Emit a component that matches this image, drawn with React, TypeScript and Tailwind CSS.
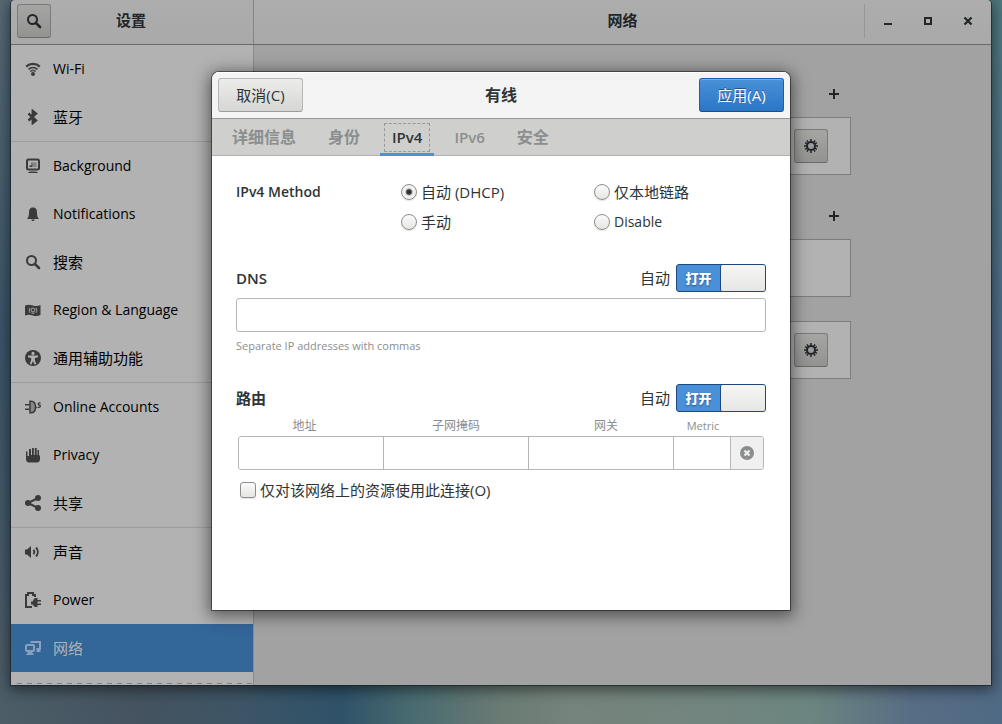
import { useState } from 'react'
import type { ReactNode } from 'react'
import clsx from 'clsx'

type SidebarItem = { label: string; icon: ReactNode; cjk?: boolean; divider?: boolean }

function Icon({ children }: { children: ReactNode }) {
	return (
		<svg viewBox="0 0 16 16" className="size-4 shrink-0" fill="currentColor" aria-hidden="true">
			{children}
		</svg>
	)
}

function SearchIcon() {
	return (
		<Icon>
			<circle cx="6.5" cy="6.5" r="4.5" fill="none" stroke="currentColor" strokeWidth="2" />
			<path d="M9.8 9.8 14 14" stroke="currentColor" strokeWidth="2.6" strokeLinecap="round" />
		</Icon>
	)
}

function GearIcon() {
	return (
		<Icon>
			<circle cx="8" cy="8" r="4" fill="none" stroke="currentColor" strokeWidth="2" />
			<path
				d="M8 1v2.5M8 12.5V15M1 8h2.5M12.5 8H15M3.9 2.4l1.3 2M10.8 11.6l1.3 2M12.1 2.4l-1.3 2M5.2 11.6l-1.3 2M2.1 4.7l2.1 1.2M11.8 10.1l2.1 1.2M13.9 4.7l-2.1 1.2M4.2 10.1l-2.1 1.2"
				stroke="currentColor"
				strokeWidth="1.5"
			/>
		</Icon>
	)
}

function PlusIcon() {
	return (
		<Icon>
			<path d="M7 3h2v4h4v2H9v4H7V9H3V7h4z" />
		</Icon>
	)
}

const sidebarItems: SidebarItem[] = [
	{
		label: 'Wi-Fi',
		icon: (
			<Icon>
				<circle cx="8" cy="13" r="2" />
				<g fill="none" stroke="currentColor">
					<path d="M1.2 5.6a10 10 0 0 1 13.600 0" strokeWidth="2.2" />
					<path d="M3.5 8.3a6.500 6.500 0 0 1 9 0" strokeWidth="1.6" />
					<path d="M5.3 10.6a4 4 0 0 1 5.400 0" strokeWidth="1.6" opacity=".8" />
				</g>
			</Icon>
		),
	},
	{
		label: '蓝牙',
		cjk: true,
		divider: true,
		icon: (
			<Icon>
				<path d="M3.5 4.5l7.5 7L7.800 14V2L11 4.500l-7.500 7" fill="none" stroke="currentColor" strokeWidth="2.4" />
			</Icon>
		),
	},
	{
		label: 'Background',
		icon: (
			<Icon>
				<rect x="2" y="1.5" width="12" height="10" rx="1.5" fill="none" stroke="currentColor" strokeWidth="2" />
				<path d="M4.500 9V7.500h2V4.500h1V9zM3 15c0-1.500 2-1.500 5-1.500s5 0 5 1.500z" />
				<path d="M8 4.500h3.500V9H8z" opacity=".4" />
			</Icon>
		),
	},
	{
		label: 'Notifications',
		icon: (
			<Icon>
				<path d="M8 1.500c3 0 4 2 4 5 0 3.500.5 4.500 2 6.500H2c1.500-2 2-3 2-6.500 0-3 1-5 4-5zM6.500 13.500h3c0 1-.5 1.500-1.500 1.500s-1.500-.5-1.500-1.500z" />
			</Icon>
		),
	},
	{ label: '搜索', cjk: true, icon: <SearchIcon /> },
	{
		label: 'Region & Language',
		icon: (
			<Icon>
				<path d="M0 3.500c3-1 5-1 8 0s5 .5 7.500-.5v10c-2.500 1-4.500 1.500-7.500.5s-5-1-8 0z" />
				<g fill="none" stroke="#b2b2b2" strokeWidth=".9">
					<circle cx="8" cy="8" r="1.900" />
					<path d="M5 5.800c-1 1.500-1 3.500 0 5M11 5.800c1 1.500 1 3.500 0 5M6.500 11.200h3" />
				</g>
			</Icon>
		),
	},
	{
		label: '通用辅助功能',
		cjk: true,
		divider: true,
		icon: (
			<Icon>
				<circle cx="8" cy="8" r="8" />
				<circle cx="8" cy="3.400" r="1.600" fill="#b2b2b2" />
				<path d="M3 5.500h10v1.700L9.800 8v2l1.500 4-1.700.6L8 11l-1.600 3.600-1.700-.6 1.500-4V8L3 7.200z" fill="#b2b2b2" />
			</Icon>
		),
	},
	{
		label: 'Online Accounts',
		icon: (
			<Icon>
				<path d="M0 5h4.500v1.500H0zM0 9.500h4.500V11H0z" />
				<path d="M5 2.200h1c3 0 4.500 2.600 4.500 5.800s-1.500 5.800-4.500 5.800H5z" fillOpacity=".35" stroke="currentColor" strokeWidth="1.500" />
				<path d="M10.500 8.500h1.300M15.600 3.800h-1.300c-1.300 0-1.500 2 0 2.200s1.300 2.300-.2 2.300h-1.500" fill="none" stroke="currentColor" strokeWidth="1.300" />
			</Icon>
		),
	},
	{
		label: 'Privacy',
		icon: (
			<Icon>
				<path d="M1 4.500h1.500V9H4V2h2v6h1V1h1.800v7h1V1h1.900v7h.8V3h1.500v6.500l1-2H15V12c0 2-1 3.500-3 3.500H4c-2 0-3-1.500-3-3.500z" />
			</Icon>
		),
	},
	{
		label: '共享',
		cjk: true,
		divider: true,
		icon: (
			<Icon>
				<path d="M13 3 3 8l10 5" fill="none" stroke="currentColor" strokeWidth="2" />
				<circle cx="13" cy="3" r="3" />
				<circle cx="3" cy="8" r="3" />
				<circle cx="13" cy="13" r="3" />
			</Icon>
		),
	},
	{
		label: '声音',
		cjk: true,
		icon: (
			<Icon>
				<path d="M0 5.500h2L6 2v12L2 10.500H0z" />
				<path d="M8.500 5.800c1 1.300 1 3.100 0 4.400M11 3.500c2.500 2.500 2.500 6.500 0 9" fill="none" stroke="currentColor" strokeWidth="1.800" />
			</Icon>
		),
	},
	{
		label: 'Power',
		icon: (
			<Icon>
				<path d="M7 15H1V3h2V1h5v2h2v2" fill="none" stroke="currentColor" strokeWidth="2" />
				<path d="M12.500 6v2H16v1.500h-3.500v2H16V13h-3.500v2H11c-1.800 0-2.800-1-3.200-2.500H6v-3h1.800C8.200 8 9.200 6 11 6z" />
			</Icon>
		),
	},
	{
		label: '网络',
		cjk: true,
		icon: (
			<Icon>
				<rect x="1" y="5" width="8" height="6" rx="1" fill="none" stroke="currentColor" strokeWidth="2" />
				<path d="M3 12h4l2 3H1z" />
				<path d="M6.500 3V2H15v7h-3.500" fill="none" stroke="currentColor" strokeWidth="2" />
				<path d="M11.500 9H14l2 3h-4.500z" />
			</Icon>
		),
	},
]

const tabs = ['详细信息', '身份', 'IPv4', 'IPv6', '安全']

function RaisedButton({ label, children }: { label: string; children: ReactNode }) {
	return (
		<button
			aria-label={label}
			className="flex size-[34px] items-center justify-center rounded-[3px] border border-[#7b7b78] border-b-[#6a6a66] bg-linear-to-b from-[#a5a5a4] to-[#939391]"
		>
			{children}
		</button>
	)
}

function Sidebar() {
	return (
		<nav className="w-[243px] shrink-0 border-r border-[#8b8b8b] bg-[#b2b2b2]">
			<ul>
				{sidebarItems.map((item) => (
					<li key={item.label} className={clsx(item.divider && 'border-b border-[#9d9d9d]')}>
						<a
							href="#"
							className={clsx(
								'flex h-12 items-center gap-3 px-3.5',
								item.cjk ? 'text-[15px]' : 'text-sm',
								item.label === '网络' ? 'bg-[#336699] text-[#b2b2b2]' : 'text-black'
							)}
						>
							<span className={item.label === '网络' ? 'text-[#8aa0bd]' : 'text-[#3a3a3a]'}>{item.icon}</span>
							{item.label}
						</a>
					</li>
				))}
			</ul>
			<div className="h-[13px] pt-[11px] pl-1.5">
				<div className="h-px bg-[repeating-linear-gradient(90deg,#7f7f7f_0_5px,transparent_5px_10px)]" />
			</div>
		</nav>
	)
}

function Card({ settings }: { settings?: boolean }) {
	return (
		<div className="flex h-[58px] items-center justify-end border border-[#7d7d7b] bg-[#b2b2b2] px-[22px]">
			{settings && (
				<RaisedButton label="选项">
					<GearIcon />
				</RaisedButton>
			)}
		</div>
	)
}

function AddButton() {
	return (
		<button aria-label="添加" className="mb-1.5 ml-auto flex size-[34px] items-center justify-center">
			<PlusIcon />
		</button>
	)
}

function NetworkPanel() {
	return (
		<main className="flex flex-1 justify-center bg-[#a2a2a2] px-6 pt-8">
			<div className="flex w-full max-w-[457px] flex-col gap-6">
				<section>
					<AddButton />
					<Card settings />
				</section>
				<section>
					<AddButton />
					<Card />
				</section>
				<Card settings />
			</div>
		</main>
	)
}

function SettingsWindow() {
	return (
		<div className="mx-[11px] overflow-hidden rounded-t-sm text-[#222628] shadow-[0_0_0_1px_rgba(20,30,36,.6),0_3px_14px_2px_rgba(0,0,0,.5)]">
			<header className="flex h-[45px] border-b border-[#6b6b66] bg-linear-to-b from-[#adadad] to-[#a9a9a9]">
				<div className="flex w-[243px] shrink-0 items-start border-r border-[#838381] px-1.5 pt-1">
					<RaisedButton label="搜索">
						<SearchIcon />
					</RaisedButton>
					<h1 className="mr-9 flex-1 text-center text-[15px] leading-8 font-bold">设置</h1>
				</div>
				<div className="grid flex-1 grid-cols-[1fr_auto_1fr] items-start pt-1">
					<span />
					<h2 className="text-[15px] leading-8 font-bold">网络</h2>
					<div className="flex justify-end gap-1.5 pr-1.5">
						<span className="h-[34px] w-px bg-[#979795]" />
						<button aria-label="最小化" className="flex size-[34px] items-center justify-center">
							<Icon><path d="M4 10h8v2H4z" /></Icon>
						</button>
						<button aria-label="最大化" className="flex size-[34px] items-center justify-center">
							<Icon><path d="M5 5h6v6H5z" fill="none" stroke="currentColor" strokeWidth="2" /></Icon>
						</button>
						<button aria-label="关闭" className="flex size-[34px] items-center justify-center">
							<Icon><path d="m4.500 4.500 7 7m0-7-7 7" stroke="currentColor" strokeWidth="2.200" /></Icon>
						</button>
					</div>
				</div>
			</header>
			<div className="flex">
				<Sidebar />
				<NetworkPanel />
			</div>
		</div>
	)
}

function MethodRadio({ id, label, checked }: { id: string; label: string; checked?: boolean }) {
	return (
		<div className="flex h-6 items-center gap-1">
			<input
				type="radio"
				name="method"
				id={id}
				defaultChecked={checked}
				className="size-4 appearance-none rounded-full border border-[#8e8e8a] bg-linear-to-b from-[#fbfbfb] to-[#e6e6e4] shadow-[0_1px_1px_rgba(0,0,0,.12)] checked:bg-[radial-gradient(circle,#2e3436_0_2px,#f1f1f0_4px)]"
			/>
			<label htmlFor={id} className={label === 'Disable' ? 'text-sm' : 'text-[15px]'}>
				{label}
			</label>
		</div>
	)
}

function AutoSwitch({ id }: { id: string }) {
	const [on, setOn] = useState(true)

	return (
		<div className="flex items-center gap-1.5">
			<label htmlFor={id} className="text-[15px]">自动</label>
			<button
				id={id}
				type="button"
				role="switch"
				aria-checked={on}
				onClick={() => setOn(!on)}
				className={clsx('flex h-7 w-[90px] rounded-[3px] border border-[#1c4a7d]', on ? 'bg-[#4a90d9]' : 'flex-row-reverse bg-[#8b8e8f]')}
			>
				<span className="flex-1 text-[13px] leading-[26px] font-black text-white [text-shadow:0_1px_2px_rgba(0,0,0,.4)]">{on ? '打开' : '关闭'}</span>
				<span className="h-full w-[45px] rounded-[2px] border-l border-[#1c4a7d] bg-linear-to-b from-[#f5f5f5] to-[#e6e6e4]" />
			</button>
		</div>
	)
}

function Dialog() {
	const [activeTab, setActiveTab] = useState('IPv4')

	return (
		<div
			role="dialog"
			aria-label="有线"
			className="w-full max-w-[578px] overflow-hidden rounded-t-[7px] bg-white text-[#2e3436] shadow-[0_0_0_1px_rgba(0,0,0,.45),0_3px_16px_3px_rgba(0,0,0,.5)]"
		>
			<header className="flex h-[47px] items-center justify-between border-b border-[#989894] bg-[#f4f4f4] px-1.5 shadow-[inset_0_1px_#fff]">
				<button className="h-[34px] w-[85px] rounded-[3px] border border-[#b6b6b3] border-b-[#9c9c98] bg-linear-to-b from-[#ececeb] to-[#d6d6d4] text-[15px]">
					取消(C)
				</button>
				<h2 className="text-base font-bold">有线</h2>
				<button className="h-[34px] w-[85px] rounded-[3px] border border-[#1c5fa8] border-b-[#184f8a] bg-linear-to-b from-[#4a90d9] to-[#2a76c6] text-[15px] text-white shadow-[inset_0_1px_#77aee5] [text-shadow:0_-1px_rgba(0,0,0,.4)]">
					应用(A)
				</button>
			</header>
			<div role="tablist" className="flex h-[37px] gap-2 bg-[#cfcfcd] pl-2 shadow-[inset_0_-1px_#b0b0ad]">
				{tabs.map((tab) => (
					<button
						key={tab}
						role="tab"
						aria-selected={tab === activeTab}
						onClick={() => setActiveTab(tab)}
						className={clsx(
							'border-b-3 px-1 pt-1 pb-px',
							tab.startsWith('IP') ? 'text-[15px] font-semibold' : 'text-base font-bold',
							tab === activeTab ? 'border-[#4a90d9]' : 'border-transparent text-[#8b8e8f]'
						)}
					>
						<span className={clsx('block border border-dashed px-[7px] leading-[27px]', tab === activeTab ? 'border-[#999]' : 'border-transparent')}>{tab}</span>
					</button>
				))}
			</div>
			<form className="px-6 pt-6 pb-27">
				<div className="grid grid-cols-[165fr_193fr_172fr] gap-y-1.5">
					<h3 className="row-span-2 text-sm leading-6 font-semibold">IPv4 Method</h3>
					<MethodRadio id="auto" label="自动 (DHCP)" checked />
					<MethodRadio id="local" label="仅本地链路" />
					<MethodRadio id="manual" label="手动" />
					<MethodRadio id="disable" label="Disable" />
				</div>

				<div className="mt-[30px] flex items-center justify-between">
					<label htmlFor="dns" className="text-[15px] font-semibold">DNS</label>
					<AutoSwitch id="dns-auto" />
				</div>
				<input id="dns" className="mt-1.5 block h-[34px] w-full rounded-[3px] border border-[#b6b6b3] px-2 text-sm" />
				<p className="mt-1.5 text-[11px] leading-4 text-[#8b8e8f]">Separate IP addresses with commas</p>

				<div className="mt-[30px] flex items-center justify-between">
					<h3 className="text-[15px] font-bold">路由</h3>
					<AutoSwitch id="route-auto" />
				</div>
				<div className="mt-1.5 grid grid-cols-[137fr_166fr_134fr_60fr_33fr] text-center text-xs leading-4 text-[#8b8e8f]">
					<label htmlFor="address">地址</label>
					<label htmlFor="netmask">子网掩码</label>
					<label htmlFor="gateway">网关</label>
					<label htmlFor="metric" className="text-[11px] leading-4">Metric</label>
				</div>
				<div className="mx-0.5 mt-0.5 grid h-[34px] grid-cols-[145fr_145fr_145fr_57fr_32fr] divide-x divide-[#b6b6b3] overflow-hidden rounded-[3px] border border-[#b6b6b3]">
					<input id="address" className="min-w-0 px-2 text-sm" />
					<input id="netmask" className="min-w-0 px-2 text-sm" />
					<input id="gateway" className="min-w-0 px-2 text-sm" />
					<input id="metric" className="min-w-0 px-2 text-sm" />
					<button type="button" aria-label="删除" className="flex items-center justify-center bg-[#f0f0f0] text-[#8b8e8f]">
						<Icon>
							<circle cx="8" cy="8" r="7" />
							<path d="m5.500 5.500 5 5m0-5-5 5" stroke="#f0f0f0" strokeWidth="2.200" />
						</Icon>
					</button>
				</div>
				<div className="mt-2 ml-1 flex h-6 items-center gap-1">
					<input
						type="checkbox"
						id="only-local"
						className="size-4 appearance-none rounded-[3px] border border-[#8e8e8a] bg-linear-to-b from-[#fbfbfb] to-[#e6e6e4] shadow-[0_1px_1px_rgba(0,0,0,.12)] checked:bg-[#4a90d9]"
					/>
					<label htmlFor="only-local" className="text-[15px]">仅对该网络上的资源使用此连接(O)</label>
				</div>
			</form>
		</div>
	)
}

export default function App() {
	return (
		<div className="relative min-h-screen overflow-hidden bg-[linear-gradient(90deg,#4c5d68_0%,#44535f_14%,#3d5566_24%,#2f5268_34%,#486a70_41%,#6a7b74_50%,#75847c_57%,#72857f_72%,#6b8580_81%,#576d84_91%,#4f6a84_100%)] font-[Open_Sans,Noto_Sans_CJK_SC,sans-serif]">
			<div className="absolute top-0 left-0 h-[680px] w-1/2 bg-linear-to-b from-[#566a74] via-[#3a556a] to-transparent" />
			<div className="absolute top-0 right-0 h-[680px] w-1/2 bg-linear-to-b from-[#4e7880] via-[#4f6c88] to-transparent" />
			<div className="relative">
				<SettingsWindow />
			</div>
			<div className="absolute inset-0 flex items-start justify-center px-6 pt-18">
				<Dialog />
			</div>
		</div>
	)
}
